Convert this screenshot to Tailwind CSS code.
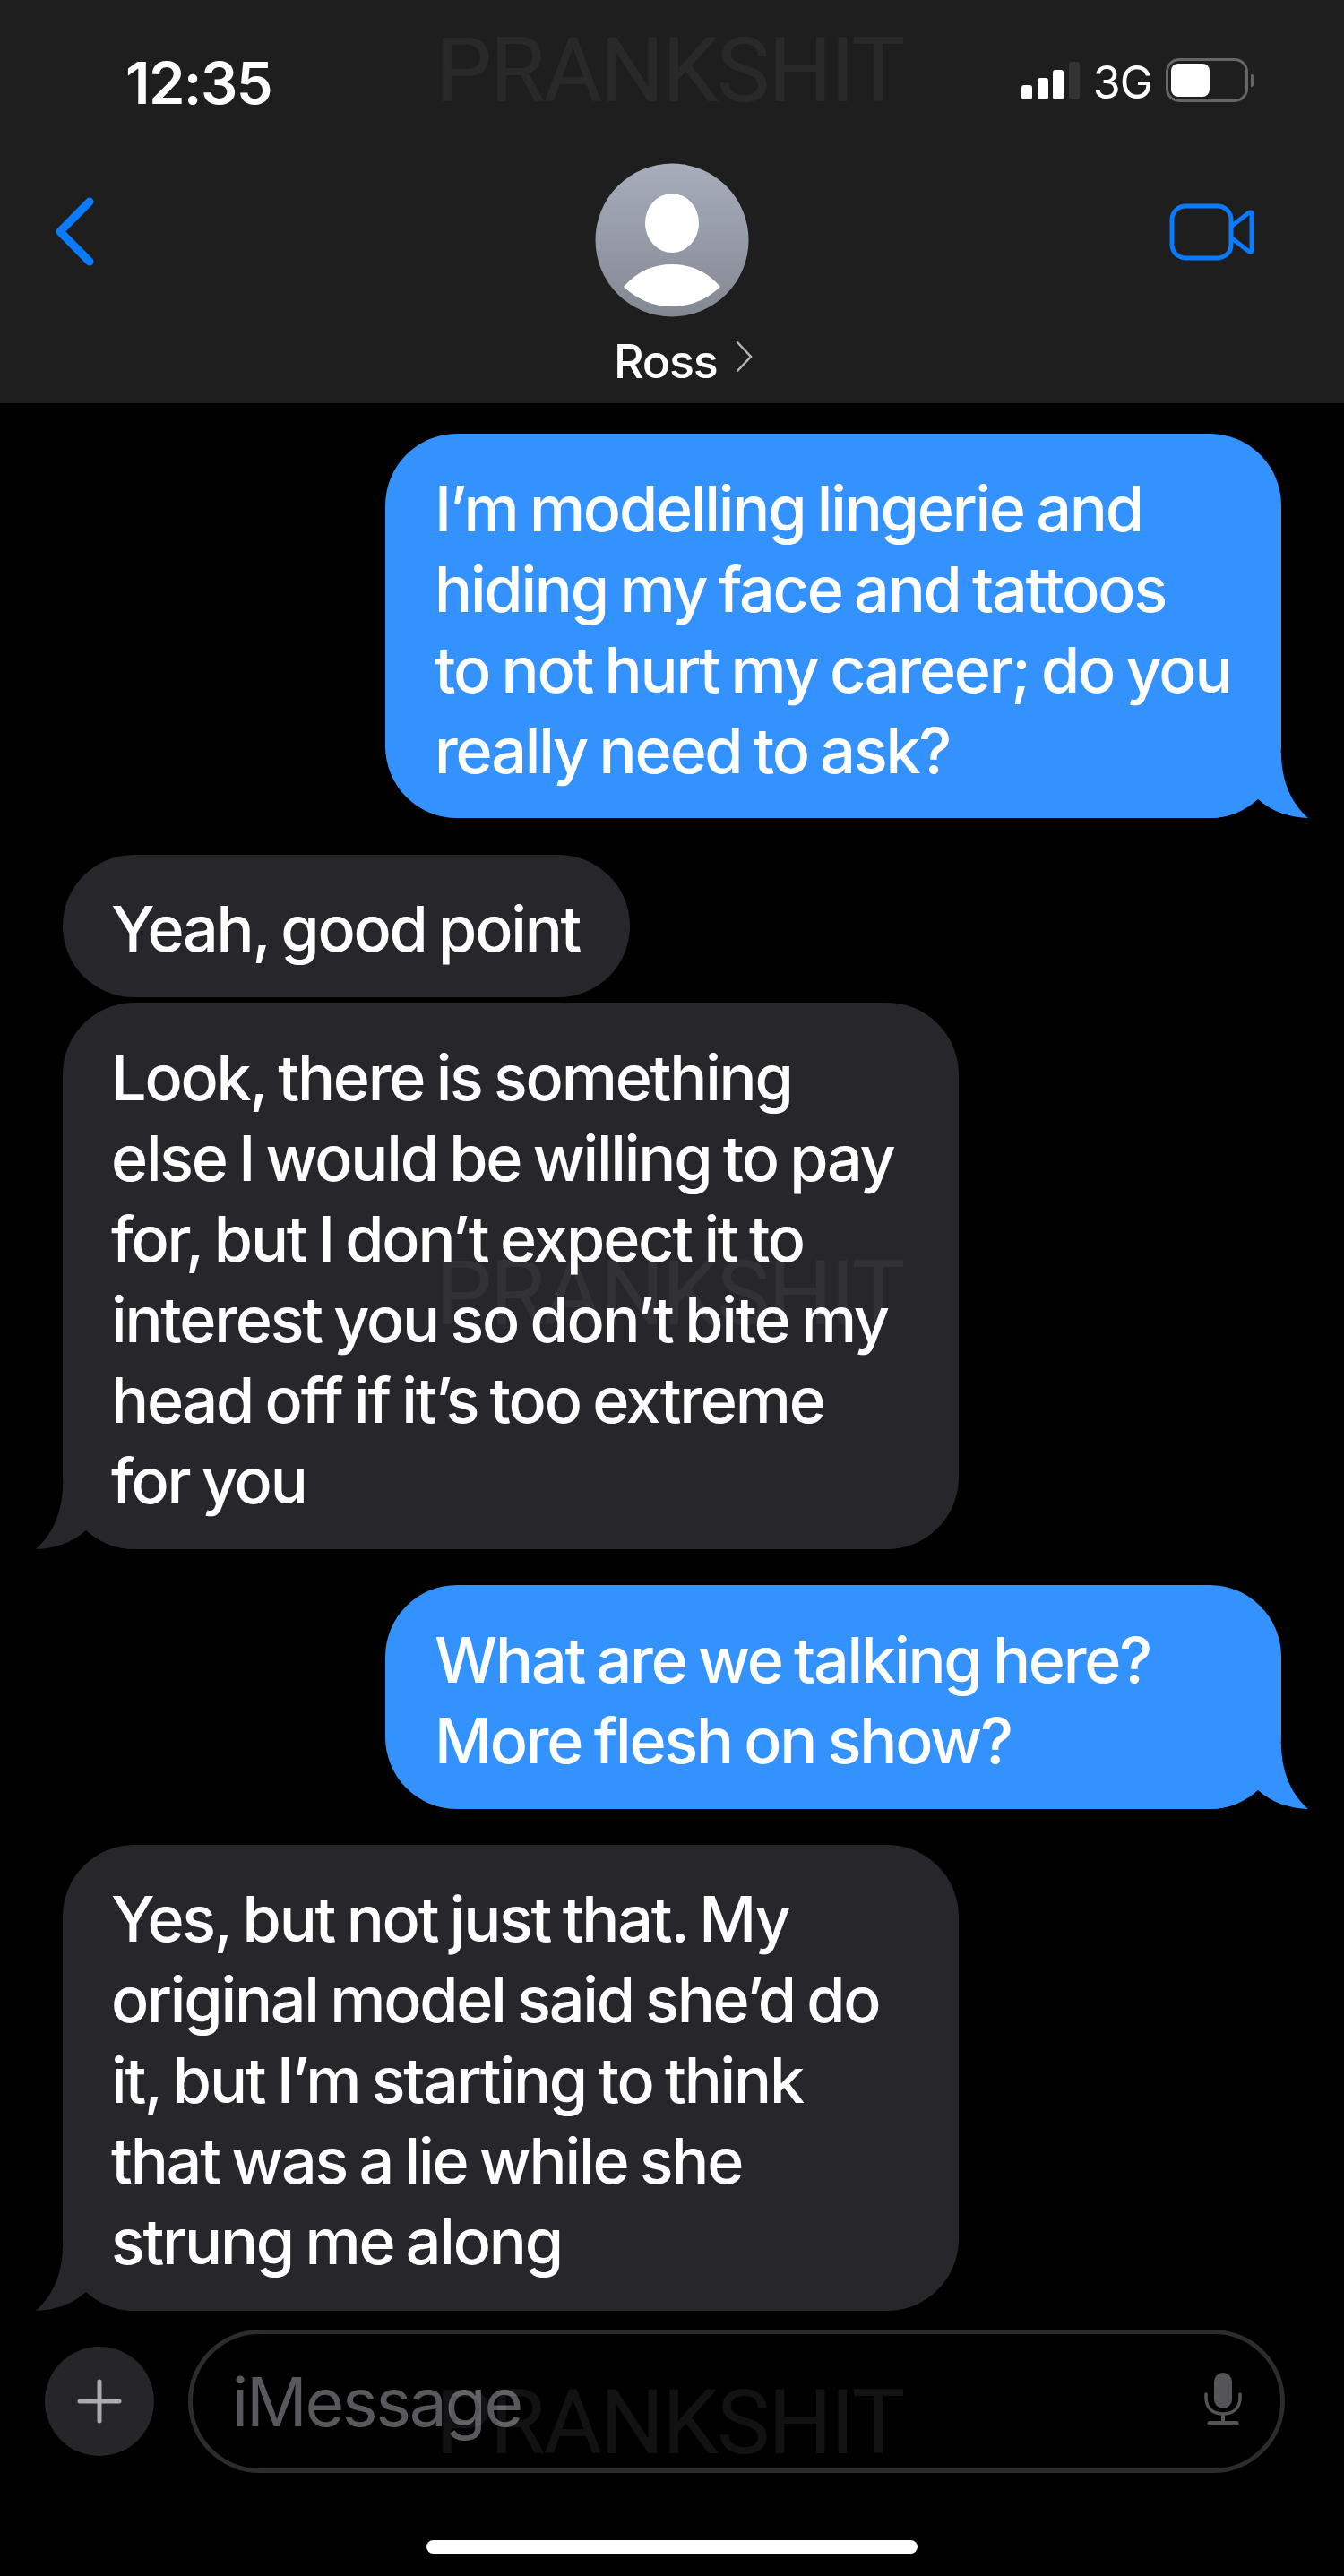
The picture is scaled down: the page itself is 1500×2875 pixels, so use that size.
<!DOCTYPE html>
<html>
<head>
<meta charset="utf-8">
<script src="https://cdn.jsdelivr.net/npm/@tailwindcss/browser@4"></script>
</head>
<body class="bg-black">
<div class="relative w-[1500px] h-[2875px] overflow-hidden bg-black text-white font-['Inter','Liberation_Sans',sans-serif]">
  <header class="relative h-[450px] bg-[#1e1e1e]">
    <div class="flex items-start h-[122px]">
      <span class="ml-[140px] mt-[53px] text-[65px] leading-[80px] font-semibold tracking-[-1.6px]">12:35</span>
      <div class="ml-auto mt-[69px] flex items-end h-[42px] gap-[5.5px]">
        <i class="block w-[12px] h-[16px] rounded-[3px] bg-white"></i>
        <i class="block w-[12px] h-[24px] rounded-[3px] bg-white"></i>
        <i class="block w-[12px] h-[33px] rounded-[3px] bg-white"></i>
        <i class="block w-[12px] h-[42px] rounded-[3px] bg-[#333333]"></i>
      </div>
      <span class="ml-[15px] mt-[66px] text-[50px] leading-[52px] tracking-[-1px]">3G</span>
      <div class="ml-[15px] mt-[65px] w-[92px] h-[49px] border-[3px] border-[#666666] rounded-[15px] p-[3px]">
        <div class="w-[43px] h-full rounded-[8px] bg-white"></div>
      </div>
      <div class="ml-[3px] mt-[83px] w-[4px] h-[14px] rounded-r-[4px] bg-[#666666] mr-[100px]"></div>
    </div>
    <div class="flex items-start">
      <svg class="ml-[56px] mt-[94px] shrink-0" width="52" height="85" viewBox="0 0 52 85" fill="none"><path d="M44 9 L11 42.5 L44 76" stroke="#0a7aff" stroke-width="9" stroke-linecap="round" stroke-linejoin="round"/></svg>
      <div class="flex flex-col items-start ml-[556px] mt-[60px] w-[172px]">
        <svg width="172" height="172" viewBox="0 0 172 172">
          <defs><linearGradient id="a" x1="0" y1="0" x2="0" y2="1"><stop offset="0" stop-color="#a7adbb"/><stop offset="1" stop-color="#848893"/></linearGradient></defs>
          <circle cx="86" cy="86" r="85.5" fill="url(#a)"/>
          <ellipse cx="86" cy="67" rx="30" ry="33" fill="#fff"/>
          <path d="M32 138 C48 120 66 113 86 113 C106 113 124 120 140 138 C124 153 106 160 86 160 C66 160 48 153 32 138 Z" fill="#fff"/>
        </svg>
        <div class="ml-[21px] mt-[18px] flex items-start whitespace-nowrap">
          <span class="text-[52px] leading-[64px] tracking-[-1.2px] font-[450]">Ross</span>
          <svg class="ml-[20px] mt-[8px] shrink-0" width="20" height="36" viewBox="0 0 20 36" fill="none"><path d="M2 2 L17 18 L2 34" stroke="#b5b5b5" stroke-width="2.5" stroke-linecap="round"/></svg>
        </div>
      </div>
      <svg class="ml-auto mr-[95px] mt-[105px] shrink-0" width="100" height="68" viewBox="0 0 100 68" fill="none">
        <rect x="3" y="3" width="66" height="58" rx="15" stroke="#0a7aff" stroke-width="5"/>
        <path d="M70 25 L88 11 Q92 8.5 92 12 L92 52 Q92 56 88 53 L70 39" stroke="#0a7aff" stroke-width="5" stroke-linejoin="round"/>
      </svg>
    </div>
  </header>

  <main class="pt-[34px] flex flex-col text-[70px] leading-[90px] tracking-[-2.2px] font-[450] [word-spacing:-3px]">
    <div class="relative self-start ml-[430px] w-[1000px] h-[429px] rounded-[80px] bg-[#3492ff] pl-[55px] pt-[39px] whitespace-nowrap">
      <svg class="absolute right-[-30px] bottom-0" width="110" height="73" viewBox="0 0 110 73"><path d="M0 73 C20 73 40 65 53 51 C70 67 90 72 110 73 C90 55 80 30 80 0 L0 0 Z" fill="#3492ff"/></svg>
      <p class="relative">I’m modelling lingerie and<br>hiding my face and tattoos<br>to not hurt my career; do you<br>really need to ask?</p>
    </div>
    <div class="self-start ml-[70px] mt-[41px] w-[633px] h-[159px] rounded-[80px] bg-[#27272b] pl-[54px] pt-[38px] whitespace-nowrap">Yeah, good point</div>
    <div class="relative self-start ml-[70px] mt-[6px] w-[1000px] h-[610px] rounded-[80px] bg-[#27272b] pl-[54px] pt-[39px] whitespace-nowrap">
      <svg class="absolute left-[-30px] bottom-0 -scale-x-100" width="110" height="73" viewBox="0 0 110 73"><path d="M0 73 C20 73 40 65 53 51 C70 67 90 72 110 73 C90 55 80 30 80 0 L0 0 Z" fill="#27272b"/></svg>
      <p class="relative">Look, there is something<br>else I would be willing to pay<br>for, but I don’t expect it to<br>interest you so don’t bite my<br>head off if it’s too extreme<br>for you</p>
    </div>
    <div class="relative self-start ml-[430px] mt-[40px] w-[1000px] h-[250px] rounded-[80px] bg-[#3492ff] pl-[55px] pt-[39px] whitespace-nowrap">
      <svg class="absolute right-[-30px] bottom-0" width="110" height="73" viewBox="0 0 110 73"><path d="M0 73 C20 73 40 65 53 51 C70 67 90 72 110 73 C90 55 80 30 80 0 L0 0 Z" fill="#3492ff"/></svg>
      <p class="relative">What are we talking here?<br>More flesh on show?</p>
    </div>
    <div class="relative self-start ml-[70px] mt-[40px] w-[1000px] h-[520px] rounded-[80px] bg-[#27272b] pl-[54px] pt-[38px] whitespace-nowrap">
      <svg class="absolute left-[-30px] bottom-0 -scale-x-100" width="110" height="73" viewBox="0 0 110 73"><path d="M0 73 C20 73 40 65 53 51 C70 67 90 72 110 73 C90 55 80 30 80 0 L0 0 Z" fill="#27272b"/></svg>
      <p class="relative">Yes, but not just that. My<br>original model said she’d do<br>it, but I’m starting to think<br>that was a lie while she<br>strung me along</p>
    </div>
  </main>

  <footer class="mt-[21px]">
    <div class="flex items-center h-[160px]">
      <div class="ml-[50px] w-[122px] h-[122px] rounded-full bg-[#262528] flex items-center justify-center">
        <svg width="50" height="50" viewBox="0 0 50 50"><path d="M25 3 V47 M3 25 H47" stroke="#ababab" stroke-width="5" stroke-linecap="round"/></svg>
      </div>
      <div class="ml-[38px] w-[1224px] h-[160px] rounded-[80px] border-[5px] border-[#2b2c2e] flex items-center pl-[44px] pr-[42px]">
        <span class="text-[75px] leading-[90px] tracking-[-2.2px] text-[#58585d] mt-[2px]">iMessage</span>
        <svg class="ml-auto -mt-[6px]" width="44" height="60" viewBox="0 0 44 60" fill="none">
          <rect x="12" y="1" width="20" height="40" rx="10" fill="#555558"/>
          <path d="M3 25 V29 C3 41 11 47 22 47 C33 47 41 41 41 29 V25" stroke="#555558" stroke-width="3.5" stroke-linecap="round"/>
          <path d="M22 47 V56" stroke="#555558" stroke-width="4"/>
          <path d="M7 57.5 H37" stroke="#555558" stroke-width="5" stroke-linecap="round"/>
        </svg>
      </div>
    </div>
    <div class="mx-auto mt-[75px] w-[548px] h-[15px] rounded-full bg-white"></div>
  </footer>

  <div class="absolute left-[486px] top-[20px] text-[100px] leading-[118px] font-normal text-white/[0.05] font-['Roboto',sans-serif] tracking-[-2px] pointer-events-none">PRANKSHIT</div>
  <div class="absolute left-[486px] top-[1385px] text-[100px] leading-[118px] font-normal text-white/[0.05] font-['Roboto',sans-serif] tracking-[-2px] pointer-events-none">PRANKSHIT</div>
  <div class="absolute left-[486px] top-[2645px] text-[100px] leading-[118px] font-normal text-white/[0.07] font-['Roboto',sans-serif] tracking-[-2px] pointer-events-none">PRANKSHIT</div>
</div>
</body>
</html>
